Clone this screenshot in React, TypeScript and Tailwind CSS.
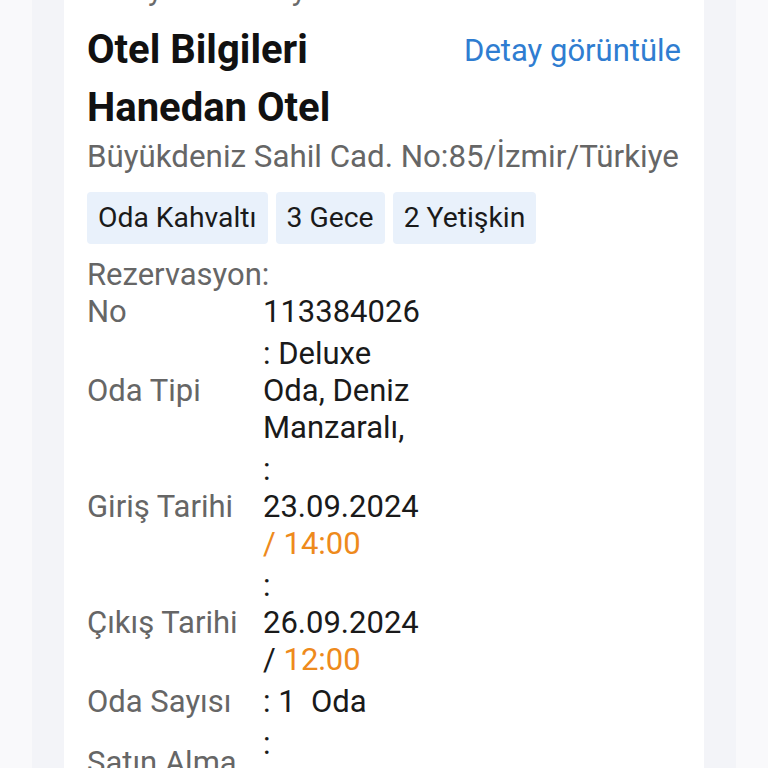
import React from 'react';

type Row = {
  label: React.ReactNode;
  value: React.ReactNode;
  bottom?: boolean;
};

const rows: Row[] = [
  {
    label: (
      <>
        <span className="block">Rezervasyon:</span>
        <span className="block">No</span>
      </>
    ),
    value: <span className="block">113384026</span>,
    bottom: true,
  },
  {
    label: 'Oda Tipi',
    value: (
      <>
        <span className="block">: Deluxe</span>
        <span className="block">Oda, Deniz</span>
        <span className="block">Manzaralı,</span>
      </>
    ),
  },
  {
    label: 'Giriş Tarihi',
    value: (
      <>
        <span className="block">:</span>
        <span className="block">23.09.2024</span>
        <span className="block text-[#ee8a1c]">/ 14:00</span>
      </>
    ),
  },
  {
    label: 'Çıkış Tarihi',
    value: (
      <>
        <span className="block">:</span>
        <span className="block">26.09.2024</span>
        <span className="block">
          / <span className="text-[#ee8a1c]">12:00</span>
        </span>
      </>
    ),
  },
  {
    label: 'Oda Sayısı',
    value: <span className="block whitespace-pre">: 1  Oda</span>,
  },
  {
    label: 'Satın Alma',
    value: (
      <>
        <span className="block">:</span>
        <span className="block">&nbsp;</span>
      </>
    ),
  },
];

const tags = ['Oda Kahvaltı', '3 Gece', '2 Yetişkin'];

const App: React.FC = () => {
  return (
    <div className="h-[768px] overflow-hidden bg-[#f9f9fb] px-8 font-['Roboto',sans-serif]">
      <div className="h-full bg-[#f3f4f8] px-8">
        <div className="h-full overflow-hidden bg-white px-[23px]">
          {/* önceki satırın kesik kısmı */}
          <p className="-mt-[29px] whitespace-nowrap text-[31px] leading-[37px] text-[#6b6b6b]">
            Kolay iade ve ayrıcalıklar
          </p>

          <div className="mt-[20px] flex items-center justify-between">
            <h2 className="text-[40px] leading-[44px] font-bold text-[#111]">Otel Bilgileri</h2>
            <a className="text-[31px] leading-[37px] text-[#2f7dd1]">Detay görüntüle</a>
          </div>

          <h3 className="mt-[14px] text-[40px] leading-[44px] font-bold text-[#111]">Hanedan Otel</h3>
          <p className="mt-[8px] whitespace-nowrap text-[31.3px] leading-[37px] text-[#666]">
            Büyükdeniz Sahil Cad. No:85/İzmir/Türkiye
          </p>

          <div className="mt-[17px] flex gap-2">
            {tags.map((tag) => (
              <span
                key={tag}
                className="rounded-[4px] bg-[#e9f1fb] px-[11px] py-[7px] text-[28.3px] leading-[38px] text-[#1a1a1a]"
              >
                {tag}
              </span>
            ))}
          </div>

          <div className="mt-[12px] grid grid-cols-[176px_220px] gap-y-[5px] whitespace-nowrap text-[31px] leading-[37px]">
            {rows.map((row, i) => (
              <React.Fragment key={i}>
                <div className="flex flex-col justify-center text-[#666]">{row.label}</div>
                <div
                  className={
                    row.bottom
                      ? 'flex flex-col justify-end text-[#1a1a1a]'
                      : 'flex flex-col justify-center text-[#1a1a1a]'
                  }
                >
                  {row.value}
                </div>
              </React.Fragment>
            ))}
          </div>
        </div>
      </div>
    </div>
  );
};

export default App;
